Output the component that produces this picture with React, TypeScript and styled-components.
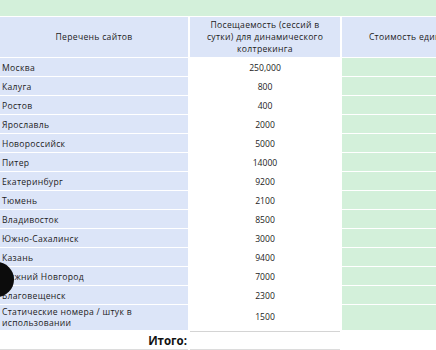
import React from 'react'
import styled, { createGlobalStyle } from 'styled-components'

const GlobalStyle = createGlobalStyle`
  *, *::before, *::after {
    box-sizing: border-box;
  }
  html, body {
    margin: 0;
    padding: 0;
    background: #ffffff;
    overflow: hidden;
  }
  body {
    font-family: 'Open Sans', 'Noto Sans', sans-serif;
    color: #1c1c1c;
  }
`

const BLUE = '#dce5f8'
const GREEN = '#d3f0da'

const Sheet = styled.div`
  position: relative;
  width: 436px;
  height: 350px;
  overflow: hidden;
`

const TopBand = styled.div`
  height: 16px;
  background: ${GREEN};
  margin-bottom: 1px;
`

const Grid = styled.div`
  display: grid;
  grid-template-columns: 188px 150px 144px;
  column-gap: 2px;
  row-gap: 1px;
  width: 484px;
`

const HeadCell = styled.div`
  height: 40px;
  background: ${BLUE};
  display: flex;
  align-items: center;
  justify-content: center;
  text-align: center;
  font-size: 8.6px;
  line-height: 12px;
  letter-spacing: 0.3px;
  padding: 0 10px;
  white-space: nowrap;
`

const HeadWrap = styled(HeadCell)`
  white-space: normal;
`

const NameCell = styled.div<{ $tall?: boolean }>`
  height: ${p => (p.$tall ? 25 : 18)}px;
  background: ${BLUE};
  display: flex;
  align-items: flex-end;
  padding: 0 0 ${p => (p.$tall ? 1 : 2)}px 2px;
  font-size: 8.6px;
  line-height: 11px;
  letter-spacing: 0.3px;
`

const NumCell = styled.div`
  display: flex;
  align-items: flex-end;
  justify-content: center;
  padding-bottom: 2px;
  font-size: 8.6px;
  line-height: 11px;
`

const TallNum = styled(NumCell)`
  align-items: center;
  padding-bottom: 0;
`

const PriceCell = styled.div`
  background: ${GREEN};
`

const TotalLabel = styled.div`
  height: 19px;
  display: flex;
  align-items: center;
  justify-content: flex-end;
  padding-right: 1px;
  font-weight: 700;
  font-size: 11.5px;
  color: #111;
  border-bottom: 1px solid #dcdcdc;
`

const TotalValue = styled.div`
  border-top: 1px solid #d4d4d4;
  border-bottom: 1px solid #dcdcdc;
`

const TotalBlank = styled.div``

const Dot = styled.div`
  position: absolute;
  left: -21px;
  top: 262px;
  width: 35px;
  height: 35px;
  border-radius: 50%;
  background: #0c0c0c;
`

const sites = [
  { name: 'Москва', visits: '250,000' },
  { name: 'Калуга', visits: '800' },
  { name: 'Ростов', visits: '400' },
  { name: 'Ярославль', visits: '2000' },
  { name: 'Новороссийск', visits: '5000' },
  { name: 'Питер', visits: '14000' },
  { name: 'Екатеринбург', visits: '9200' },
  { name: 'Тюмень', visits: '2100' },
  { name: 'Владивосток', visits: '8500' },
  { name: 'Южно-Сахалинск', visits: '3000' },
  { name: 'Казань', visits: '9400' },
  { name: 'Нижний Новгород', visits: '7000' },
  { name: 'Благовещенск', visits: '2300' }
]

const App: React.FC = () => {
  return (
    <>
      <GlobalStyle />
      <Sheet>
        <TopBand />
        <Grid>
          <HeadCell>Перечень сайтов</HeadCell>
          <HeadWrap>Посещаемость (сессий в сутки) для динамического колтрекинга</HeadWrap>
          <HeadCell>Стоимость единицы</HeadCell>

          {sites.map(site => (
            <React.Fragment key={site.name}>
              <NameCell>{site.name}</NameCell>
              <NumCell>{site.visits}</NumCell>
              <PriceCell />
            </React.Fragment>
          ))}

          <NameCell $tall>Статические номера / штук в использовании</NameCell>
          <TallNum>1500</TallNum>
          <PriceCell />

          <TotalLabel>Итого:</TotalLabel>
          <TotalValue />
          <TotalBlank />
        </Grid>
        <Dot />
      </Sheet>
    </>
  )
}

export default App
